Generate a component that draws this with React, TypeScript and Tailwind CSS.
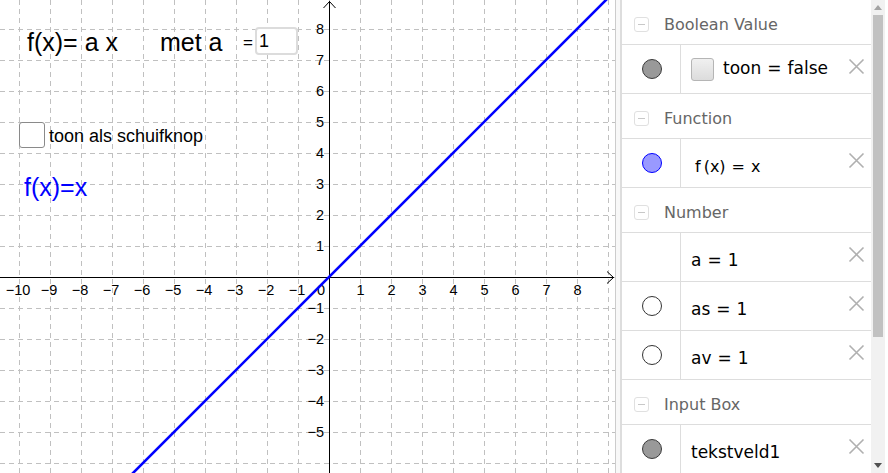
import React from "react";

// --- GRAPH GEOMETRY ---
const OX = 329;
const OY = 277;
const U = 31;
const W = 616;
const H = 473;

const xs = Array.from({ length: 20 }, (_, i) => i - 10); // -10..9
const ys = Array.from({ length: 15 }, (_, i) => i - 8); // -8..6 (pixel rows)

const Graph = () => {
  const lineStart = { x: OX + -7 * U, y: OY + 7 * U };
  const lineEnd = { x: OX + 9.2 * U, y: OY - 9.2 * U };
  return (
    <svg width={W} height={H} className="block">
      {xs.map((k) => (
        <line
          key={"vx" + k}
          x1={OX + k * U + 0.5}
          x2={OX + k * U + 0.5}
          y1={0}
          y2={H}
          stroke="#c0c0c0"
          strokeDasharray="5 4"
        />
      ))}
      {ys.map((k) => (
        <line
          key={"hy" + k}
          y1={OY + k * U + 0.5}
          y2={OY + k * U + 0.5}
          x1={0}
          x2={W}
          stroke="#c0c0c0"
          strokeDasharray="5 4"
        />
      ))}

      {/* axes */}
      <line x1={0} x2={614} y1={OY + 0.5} y2={OY + 0.5} stroke="#000" />
      <polyline
        points={`607,${OY - 5.5} 613.5,${OY + 0.5} 607,${OY + 6.5}`}
        fill="none"
        stroke="#000"
      />
      <line x1={OX + 0.5} x2={OX + 0.5} y1={1} y2={H} stroke="#000" />
      <polyline
        points={`${OX - 5.5},8 ${OX + 0.5},1.5 ${OX + 6.5},8`}
        fill="none"
        stroke="#000"
      />

      {/* labels */}
      <g fontFamily="'Liberation Sans', Arial, sans-serif" fontSize="14.5" fill="#000">
        {xs
          .filter((k) => k !== 0 && k <= 8)
          .map((k) => (
            <text
              key={"lx" + k}
              x={OX + k * U + (k < 0 ? -1 : 0.5)}
              y={OY + 18}
              textAnchor="middle"
            >
              {k < 0 ? "\u2212" + -k : k}
            </text>
          ))}
        <text x={OX - 4} y={OY + 18} textAnchor="end">
          0
        </text>
        {[8, 7, 6, 5, 4, 3, 2, 1, -1, -2, -3, -4, -5].map((k) => (
          <text key={"ly" + k} x={OX - 5} y={OY - k * U + 5} textAnchor="end">
            {k < 0 ? "\u2212" + -k : k}
          </text>
        ))}
      </g>

      {/* f(x) = x */}
      <line
        x1={lineStart.x}
        y1={lineStart.y}
        x2={lineEnd.x}
        y2={lineEnd.y}
        stroke="#0000ff"
        strokeWidth="2.6"
      />
    </svg>
  );
};

// --- ALGEBRA VIEW ---
const CloseX = () => (
  <svg
    width="17"
    height="17"
    viewBox="0 0 17 17"
    className="absolute right-[6px] top-[13px]"
  >
    <path d="M1.5 1.5 L15.5 15.5 M15.5 1.5 L1.5 15.5" stroke="#b0b0b0" strokeWidth="1.6" />
  </svg>
);

const Header = ({ label }: { label: string }) => (
  <div className="flex h-[45px] items-center border-b border-[#dddddd] pl-[12px] pt-[5px]">
    <div className="flex h-[15px] w-[15px] items-center justify-center rounded-[3px] border border-[#e0e0e0]">
      <div className="h-px w-[7px] bg-[#c8c8c8]" />
    </div>
    <span className="ml-[15px] text-[16px] text-[#666666]">{label}</span>
  </div>
);

type Marble = "gray" | "blue" | "empty" | "none";

const Row = ({
  marble,
  children,
  lower = true,
}: {
  marble: Marble;
  children: React.ReactNode;
  lower?: boolean;
}) => (
  <div className="relative flex h-[49px] border-b border-[#dddddd]">
    <div className="flex w-[59px] items-center justify-center border-r border-[#dddddd] pl-[2px]">
      {marble === "gray" && (
        <div className="h-[20px] w-[20px] rounded-full border border-[#3a3a3a] bg-[#999999]" />
      )}
      {marble === "blue" && (
        <div className="h-[20px] w-[20px] rounded-full border border-[#0000ff] bg-[#9999ff]" />
      )}
      {marble === "empty" && (
        <div className="h-[20px] w-[20px] rounded-full border border-[#333333] bg-white" />
      )}
    </div>
    <div
      className={`flex flex-1 items-center pl-[10px] text-[17px] text-black ${lower ? "pt-[8px]" : ""}`}
    >
      {children}
    </div>
    <CloseX />
  </div>
);

const Eq = () => <span className="mx-[6px]">=</span>;

const AlgebraView = () => (
  <div
    className="h-[473px] w-[250px] overflow-hidden border-l border-[#dddddd] bg-white"
    style={{ fontFamily: "'DejaVu Sans', sans-serif" }}
  >
    <Header label="Boolean Value" />
    <Row marble="gray" lower={false}>
      <div className="mr-[9px] h-[23px] w-[23px] rounded-[3px] border border-[#b5b5b5] bg-gradient-to-b from-[#f0f0f0] to-[#dcdcdc]" />
      <span>
        toon
        <Eq />
        false
      </span>
    </Row>
    <Header label="Function" />
    <Row marble="blue">
      <span className="ml-[4px] text-[16px]">
        f<span className="ml-[3px]">(x)</span>
        <Eq />x
      </span>
    </Row>
    <Header label="Number" />
    <Row marble="none">
      <span>
        a<Eq />1
      </span>
    </Row>
    <Row marble="empty">
      <span>
        as
        <Eq />1
      </span>
    </Row>
    <Row marble="empty">
      <span>
        av
        <Eq />1
      </span>
    </Row>
    <Header label="Input Box" />
    <Row marble="gray">
      <span>tekstveld1</span>
    </Row>
  </div>
);

const Scrollbar = () => (
  <div className="flex h-[473px] w-[14px] flex-col items-center bg-[#f1f1f1]">
    <div className="mt-[5px] h-0 w-0 border-x-[4px] border-b-[5px] border-x-transparent border-b-[#a3a3a3]" />
    <div className="mt-[5px] h-[322px] w-[10px] bg-[#c1c1c1]" />
    <div className="flex-1" />
    <div className="mb-[5px] h-0 w-0 border-x-[4px] border-t-[5px] border-x-transparent border-t-[#505050]" />
  </div>
);

export default function App() {
  return (
    <div className="flex h-[473px] w-[888px] overflow-hidden bg-white">
      <div className="relative h-[473px] w-[616px] shrink-0 overflow-hidden border-r border-[#cccccc] bg-white">
        <Graph />
        <div
          className="absolute inset-0 text-black"
          style={{ fontFamily: "'Liberation Sans', Arial, sans-serif" }}
        >
          <div className="absolute left-[27px] top-[30px] text-[25px] leading-[25px]">
            f(x)= a x
          </div>
          <div className="absolute left-[160px] top-[30px] text-[25px] leading-[25px]">
            met a
          </div>
          <div className="absolute left-[243px] top-[34px] text-[17px] leading-[17px]">=</div>
          <div className="absolute left-[255px] top-[27px] flex h-[28px] w-[43px] items-center rounded-[4px] border-2 border-[#dcdcdc] bg-white pl-[2px] text-[18px] leading-none">
            1
          </div>
          <div className="absolute left-[19px] top-[122px] h-[26px] w-[26px] rounded-[3px] border-[1.5px] border-[#8a8a8a] bg-white" />
          <div className="absolute left-[49px] top-[127px] text-[18px] leading-[18px]">
            toon als schuifknop
          </div>
          <div className="absolute left-[24px] top-[175px] text-[25px] leading-[25px] text-[#0000ff]">
            f(x)=x
          </div>
        </div>
      </div>
      <div className="w-[5px] shrink-0 border-r border-[#dddddd] bg-[#f8f8f8]" />
      <AlgebraView />
      <Scrollbar />
    </div>
  );
}
